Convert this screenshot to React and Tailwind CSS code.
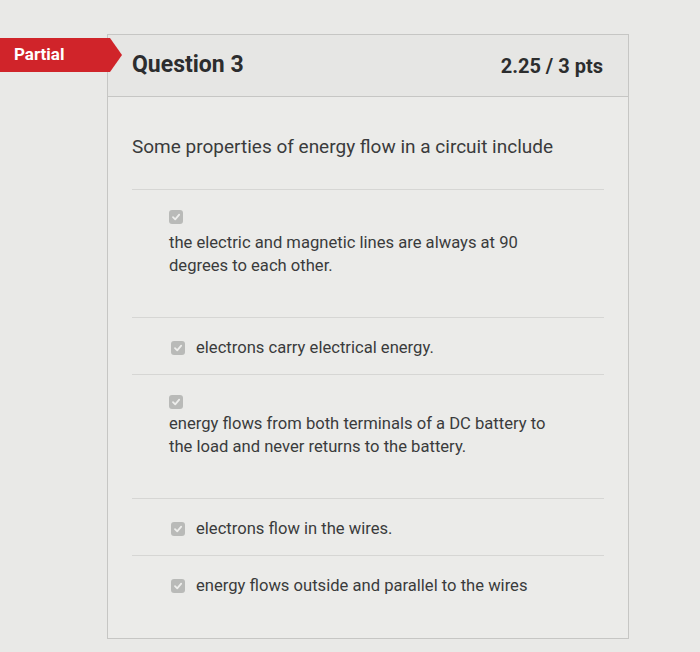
const Check = () => (
  <span className="flex h-[14px] w-[14px] shrink-0 items-center justify-center rounded-[3px] bg-[#b9bab8]">
    <svg width="10" height="10" viewBox="0 0 10 10">
      <path d="M2 5.2 L4.2 7.3 L8.2 2.6" fill="none" stroke="#eeeeec" strokeWidth="1.8" strokeLinecap="round" strokeLinejoin="round" />
    </svg>
  </span>
);

const answers = [
  { text: "the electric and magnetic lines are always at 90 degrees to each other.", multi: true, gap: "mt-[7px]" },
  { text: "electrons carry electrical energy.", multi: false },
  { text: "energy flows from both terminals of a DC battery to the load and never returns to the battery.", multi: true, gap: "mt-[3px]" },
  { text: "electrons flow in the wires.", multi: false },
  { text: "energy flows outside and parallel to the wires", multi: false },
];

export default function App() {
  return (
    <div
      className="relative h-[652px] w-[700px] overflow-hidden bg-[#e9e9e7] pt-[34px] text-[#3a3b3c]"
      style={{ fontFamily: "Roboto, 'Liberation Sans', sans-serif" }}
    >
      {/* Partial ribbon */}
      <div className="absolute left-0 top-[38px] z-10 flex h-[34px] items-center">
        <div className="flex h-full w-[110px] items-center bg-[#d0242a] pl-[14px] text-[17px] font-bold text-white">
          Partial
        </div>
        <div className="h-0 w-0 border-y-[17px] border-l-[12px] border-y-transparent border-l-[#d0242a]" />
      </div>

      <div className="ml-[107px] w-[522px] border border-[#c6c6c4] bg-[#ebebe9]">
        <div className="flex h-[62px] items-center justify-between border-b border-[#c6c6c4] bg-[#e6e6e4] pl-[24px] pr-[25px]">
          <span className="text-[23px] font-bold text-[#2c2d2e]">Question 3</span>
          <span className="text-[20px] font-bold text-[#2c2d2e]">2.25 / 3 pts</span>
        </div>

        <div className="px-[24px] pb-[26px]">
          <p className="pb-[29px] pt-[37px] text-[19px] leading-[26px]">
            Some properties of energy flow in a circuit include
          </p>

          {answers.map((a, i) =>
            a.multi ? (
              <div key={i} className="border-t border-[#d6d6d4] pb-[40px] pl-[37px] pt-[20px]">
                <Check />
                <p className={`${a.gap} w-[388px] text-[16.6px] leading-[23px]`}>{a.text}</p>
              </div>
            ) : (
              <div key={i} className="flex items-center gap-[11px] border-t border-[#d6d6d4] pb-[15px] pl-[39px] pt-[18px]">
                <Check />
                <span className="text-[16.6px] leading-[23px]">{a.text}</span>
              </div>
            )
          )}
        </div>
      </div>
    </div>
  );
}
